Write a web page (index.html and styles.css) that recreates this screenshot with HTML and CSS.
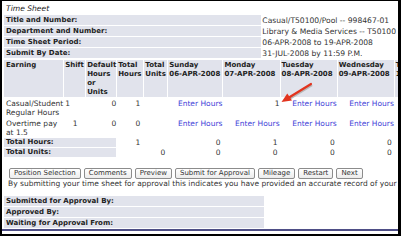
FILE: index.html
```html
<!DOCTYPE html>
<html lang="en">
<head>
    <meta charset="UTF-8">
    <title>Time Sheet</title>
    <link rel="stylesheet" href="styles.css">
</head>
<body>
    <div class="frame">
        <div class="title">Time Sheet</div>
        <table class="info">
            <tr><th>Title and Number:</th><td>Casual/T50100/Pool -- 998467-01</td></tr>
            <tr><th>Department and Number:</th><td>Library &amp; Media Services -- T50100</td></tr>
            <tr><th>Time Sheet Period:</th><td>06-APR-2008 to 19-APR-2008</td></tr>
            <tr><th>Submit By Date:</th><td>31-JUL-2008 by 11:59 P.M.</td></tr>
        </table>
        <table class="sheet">
            <thead>
                <tr>
                    <th class="c-earn">Earning</th>
                    <th class="c-shift">Shift</th>
                    <th class="c-def">Default Hours or Units</th>
                    <th class="c-th">Total Hours</th>
                    <th class="c-tu">Total Units</th>
                    <th class="c-sun">Sunday <span class="date">06-APR-2008</span></th>
                    <th class="c-day">Monday <span class="date">07-APR-2008</span></th>
                    <th class="c-day">Tuesday <span class="date">08-APR-2008</span></th>
                    <th class="c-day">Wednesday <span class="date">09-APR-2008</span></th>
                    <th class="c-day">Thursday <span class="date">10-APR-2008</span></th>
                </tr>
            </thead>
            <tbody>
                <tr class="entry">
                    <td class="earn">Casual/Student Regular Hours</td>
                    <td class="shift">1</td>
                    <td>0</td>
                    <td class="th">1</td>
                    <td></td>
                    <td><a href="#">Enter Hours</a></td>
                    <td>1</td>
                    <td><a href="#">Enter Hours</a></td>
                    <td><a href="#">Enter Hours</a></td>
                    <td><a href="#">Enter Hours</a></td>
                </tr>
                <tr class="entry">
                    <td class="earn">Overtime pay at 1.5</td>
                    <td class="shift mid">1</td>
                    <td>0</td>
                    <td class="th">0</td>
                    <td></td>
                    <td><a href="#">Enter Hours</a></td>
                    <td><a href="#">Enter Hours</a></td>
                    <td><a href="#">Enter Hours</a></td>
                    <td><a href="#">Enter Hours</a></td>
                    <td><a href="#">Enter Hours</a></td>
                </tr>
                <tr class="total">
                    <th colspan="3">Total Hours:</th>
                    <td class="th">1</td>
                    <td></td>
                    <td>0</td>
                    <td>1</td>
                    <td>0</td>
                    <td>0</td>
                    <td>0</td>
                </tr>
                <tr class="total">
                    <th colspan="3">Total Units:</th>
                    <td></td>
                    <td>0</td>
                    <td>0</td>
                    <td>0</td>
                    <td>0</td>
                    <td>0</td>
                    <td>0</td>
                </tr>
            </tbody>
        </table>
        <div class="buttons">
            <button>Position Selection</button>
            <button>Comments</button>
            <button>Preview</button>
            <button>Submit for Approval</button>
            <button>Mileage</button>
            <button>Restart</button>
            <button>Next</button>
        </div>
        <p class="note">By submitting your time sheet for approval this indicates you have provided an accurate record of your absences and hours worked.</p>
        <table class="approval">
            <tr><th>Submitted for Approval By:</th><td></td></tr>
            <tr><th>Approved By:</th><td></td></tr>
            <tr><th>Waiting for Approval From:</th><td></td></tr>
        </table>
        <div class="bar"></div>

        <svg class="arrow" width="401" height="236" viewBox="0 0 401 236">
            <line x1="311" y1="84" x2="289" y2="97.5" stroke="#b8b8b8" stroke-width="2.4" transform="translate(1 1)"/>
            <line x1="311" y1="84" x2="289" y2="97.5" stroke="#e2341f" stroke-width="2.2" stroke-linecap="round"/>
            <polygon points="281.5,102 292,100.6 287.3,93.4" fill="#e2341f"/>
        </svg>
    </div>
</body>
</html>
```

FILE: styles.css
```css
body {
    margin: 0;
    background-color: #fff;
    font-family: "DejaVu Sans", Verdana, sans-serif;
    color: #333;
}
.frame {
    position: relative;
    box-sizing: border-box;
    width: 401px;
    height: 236px;
    border-style: solid;
    border-color: #000;
    border-width: 1px 3px 2px 2px;
    padding-left: 1px;
    overflow: hidden;
}
.title {
    padding: 3px 0 0 3px;
    font-size: 7.6px;
    line-height: 10px;
    font-style: italic;
    color: #222;
}
table {
    border-spacing: 1px;
    font-size: 7.5px;
    line-height: 9px;
}
th, td {
    padding: 1px 1px 0;
    text-align: left;
    vertical-align: top;
    white-space: nowrap;
}
th {
    font-size: 7px;
    font-weight: bold;
    color: #222;
    background-color: #e1e3ec;
}
.info th {
    width: 256px;
    padding-left: 2px;
}
.info td {
    padding-left: 0;
    font-size: 7.6px;
}
.sheet {
    table-layout: fixed;
    width: 449px;
}
.sheet thead th {
    white-space: normal;
    padding-bottom: 0;
}
.sheet .date {
    display: block;
    white-space: nowrap;
}
.sheet .c-earn { width: 56px; padding-left: 2px; }
.sheet .c-shift { width: 19px; }
.sheet .c-def { width: 28px; }
.sheet .c-th { width: 24px; }
.sheet .c-tu { width: 21px; }
.sheet .c-sun { width: 52px; }
.sheet .c-day { width: 54px; }
.sheet td {
    text-align: right;
}
.entry td {
    padding-right: 0;
}
.sheet .earn {
    text-align: left;
    white-space: normal;
    padding-left: 2px;
}
.sheet .shift {
    text-align: left;
}
.sheet .mid {
    text-align: center;
}
.sheet .th {
    padding-right: 3px;
}
.total th,
.total td {
    padding-top: 0;
}
.total th {
    padding-left: 2px;
}
.total td {
    padding-right: 2px;
}
a {
    color: #4343d8;
    text-decoration: none;
}
.buttons {
    display: flex;
    gap: 3px;
    margin: 10px 0 0 6px;
}
button {
    height: 11px;
    padding: 0 4px;
    border: 1px solid #8c8c8c;
    border-radius: 2px;
    background: linear-gradient(#ffffff, #ececec);
    font-family: "DejaVu Sans", Verdana, sans-serif;
    font-size: 7px;
    line-height: 9px;
    color: #333;
}
.note {
    margin: 0;
    padding-left: 5px;
    font-size: 7.5px;
    line-height: 9px;
    white-space: nowrap;
}
.approval {
    margin-top: 7px;
}
.approval th {
    width: 257px;
    padding-left: 2px;
}
.bar {
    height: 2px;
    margin-left: -1px;
    background-color: #4e4e86;
}
.arrow {
    position: absolute;
    left: 0;
    top: 0;
    margin: -1px 0 0 -2px;
    pointer-events: none;
}
```
